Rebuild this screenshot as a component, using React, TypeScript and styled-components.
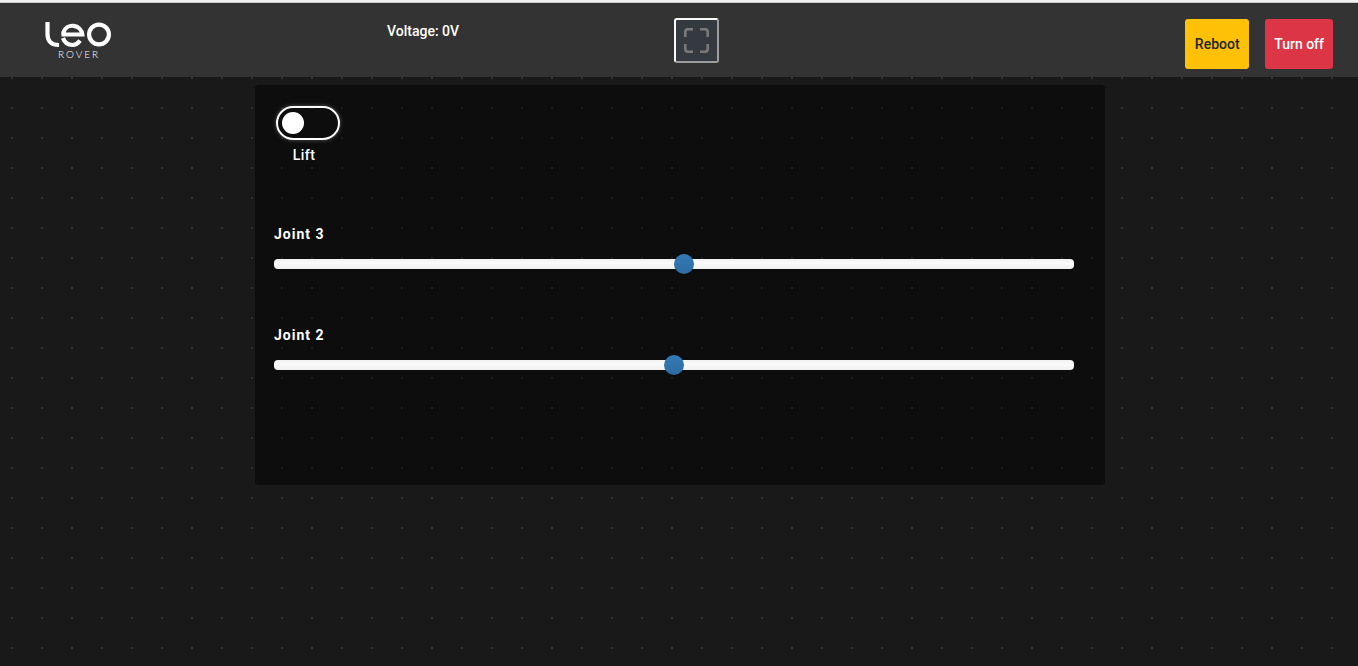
import React, { useState } from "react";
import styled, { createGlobalStyle } from "styled-components";

const GlobalStyle = createGlobalStyle`
  *, *::before, *::after { box-sizing: border-box; }
  body {
    margin: 0;
    min-height: 100vh;
    font-family: Roboto, "Liberation Sans", sans-serif;
    font-size: 14px;
    font-weight: 500;
    line-height: 20px;
    color: #fff;
    background: conic-gradient(from 90deg at 28px 28px, #333 25%, #191919 0) 13px 19px / 30px 30px;
  }
`;

const Header = styled.header`
  display: grid;
  grid-template-columns: 342fr 287fr 659fr;
  align-items: start;
  height: 77px;
  padding: 16px 25px 0 45px;
  background: #333;
  border-top: 2px solid #f0f0f0;
  box-shadow: inset 0 1px #ccc;
`;

const Logo = styled.a`
  display: flex;
  flex-direction: column;
  align-items: center;
  width: 66px;
  padding-top: 4px;
  color: #fff;
  text-decoration: none;
`;

const LogoName = styled.span`
  font-family: Lato, sans-serif;
  font-size: 10px;
  font-weight: 300;
  line-height: 12px;
  letter-spacing: 2px;
  padding-left: 2px;
`;

const Voltage = styled.span`
  padding-top: 3px;
`;

const Actions = styled.div`
  display: flex;
  justify-content: space-between;
`;

const FullscreenButton = styled.button`
  display: flex;
  align-items: center;
  justify-content: center;
  width: 45px;
  height: 45px;
  padding: 0;
  color: #7a7a7a;
  background: #343a40;
  border: 2px solid;
  border-color: #f8fbfb #9b9da0 #9b9da0 #f8fbfb;
  border-radius: 3px;
  cursor: pointer;
`;

const Power = styled.div`
  display: flex;
  gap: 16px;
  padding-top: 1px;
`;

const PowerButton = styled.button<{ $tone: "warning" | "danger" }>`
  height: 50px;
  min-width: 64px;
  padding: 0 9px;
  font: inherit;
  white-space: nowrap;
  color: ${(p) => (p.$tone === "warning" ? "#212529" : "#fff")};
  background: ${(p) => (p.$tone === "warning" ? "#ffc107" : "#dc3545")};
  border: 0;
  border-radius: 3px;
  cursor: pointer;
`;

const Main = styled.main`
  padding: 8px 0 8px 2px;
`;

const Panel = styled.section`
  max-width: 850px;
  min-height: 400px;
  margin: 0 auto;
  padding: 21px 31px 21px 19px;
  background: rgba(0, 0, 0, 0.47);
  border-radius: 4px;
`;

const SwitchField = styled.label`
  display: inline-flex;
  flex-direction: column;
  gap: 5px;
  margin-left: 2px;
  letter-spacing: 0.5px;
  cursor: pointer;
`;

const Switch = styled.input`
  appearance: none;
  width: 64px;
  height: 34px;
  margin: 0;
  padding: 4px;
  border: 2px solid #fff;
  border-radius: 17px;
  box-shadow: 0 0 4px rgba(255, 255, 255, 0.3);
  cursor: pointer;

  &::before {
    content: "";
    display: block;
    width: 22px;
    height: 22px;
    border-radius: 50%;
    background: #fff;
  }
  &:checked::before { margin-left: auto; }
`;

const SwitchText = styled.span`
  width: 56px;
  text-align: center;
`;

const Joints = styled.div`
  display: grid;
  gap: 56px;
  padding-top: 59px;
`;

const JointField = styled.label`
  display: grid;
  gap: 15px;
  font-weight: 700;
  letter-spacing: 1px;
`;

const Slider = styled.input`
  appearance: none;
  width: 100%;
  height: 10px;
  margin: 0;
  background: linear-gradient(#f0f0f0, #fafafa 40%, #f0f0f0);
  border-radius: 4px;
  cursor: pointer;

  &::-webkit-slider-thumb {
    appearance: none;
    width: 20px;
    height: 20px;
    border-radius: 50%;
    background: linear-gradient(#337ab7, #2d6ca2);
  }
`;

function LeoMark() {
  return (
    <svg width="66" height="26" viewBox="0 0 66 26" fill="none" stroke="currentColor" strokeWidth="4.2" aria-hidden="true">
      <path d="M2.5 0V12Q2.5 23 14 23" />
      <path d="M16.5 12.5H37.3A9.7 9.7 0 0 0 18.4 10.5V13" />
      <path d="M18 16Q20.5 23 27.5 23Q32 23 35 18.5" />
      <circle cx="54" cy="12.5" r="9.9" />
    </svg>
  );
}

function CornersIcon() {
  return (
    <svg width="25" height="25" viewBox="0 0 25 25" fill="none" stroke="currentColor" strokeWidth="2.6" aria-hidden="true">
      <path d="M1.3 9V4Q1.3 1.3 4 1.3H9M16 1.3H21Q23.7 1.3 23.7 4V9M23.7 16V21Q23.7 23.7 21 23.7H16M9 23.7H4Q1.3 23.7 1.3 21V16" />
    </svg>
  );
}

function Joint({ name, initial }: { name: string; initial: number }) {
  const [value, setValue] = useState(initial);
  return (
    <JointField>
      {name}
      <Slider type="range" min={-78} max={78} value={value} onChange={(e) => setValue(Number(e.target.value))} />
    </JointField>
  );
}

export default function App() {
  return (
    <>
      <GlobalStyle />
      <Header>
        <Logo href="#" aria-label="Leo Rover">
          <LeoMark />
          <LogoName>ROVER</LogoName>
        </Logo>
        <Voltage>Voltage: 0V</Voltage>
        <Actions>
          <FullscreenButton type="button" aria-label="Fullscreen">
            <CornersIcon />
          </FullscreenButton>
          <Power>
            <PowerButton type="button" $tone="warning">Reboot</PowerButton>
            <PowerButton type="button" $tone="danger">Turn off</PowerButton>
          </Power>
        </Actions>
      </Header>
      <Main>
        <Panel>
          <SwitchField>
            <Switch type="checkbox" />
            <SwitchText>Lift</SwitchText>
          </SwitchField>
          <Joints>
            <Joint name="Joint 3" initial={2} />
            <Joint name="Joint 2" initial={0} />
          </Joints>
        </Panel>
      </Main>
    </>
  );
}
